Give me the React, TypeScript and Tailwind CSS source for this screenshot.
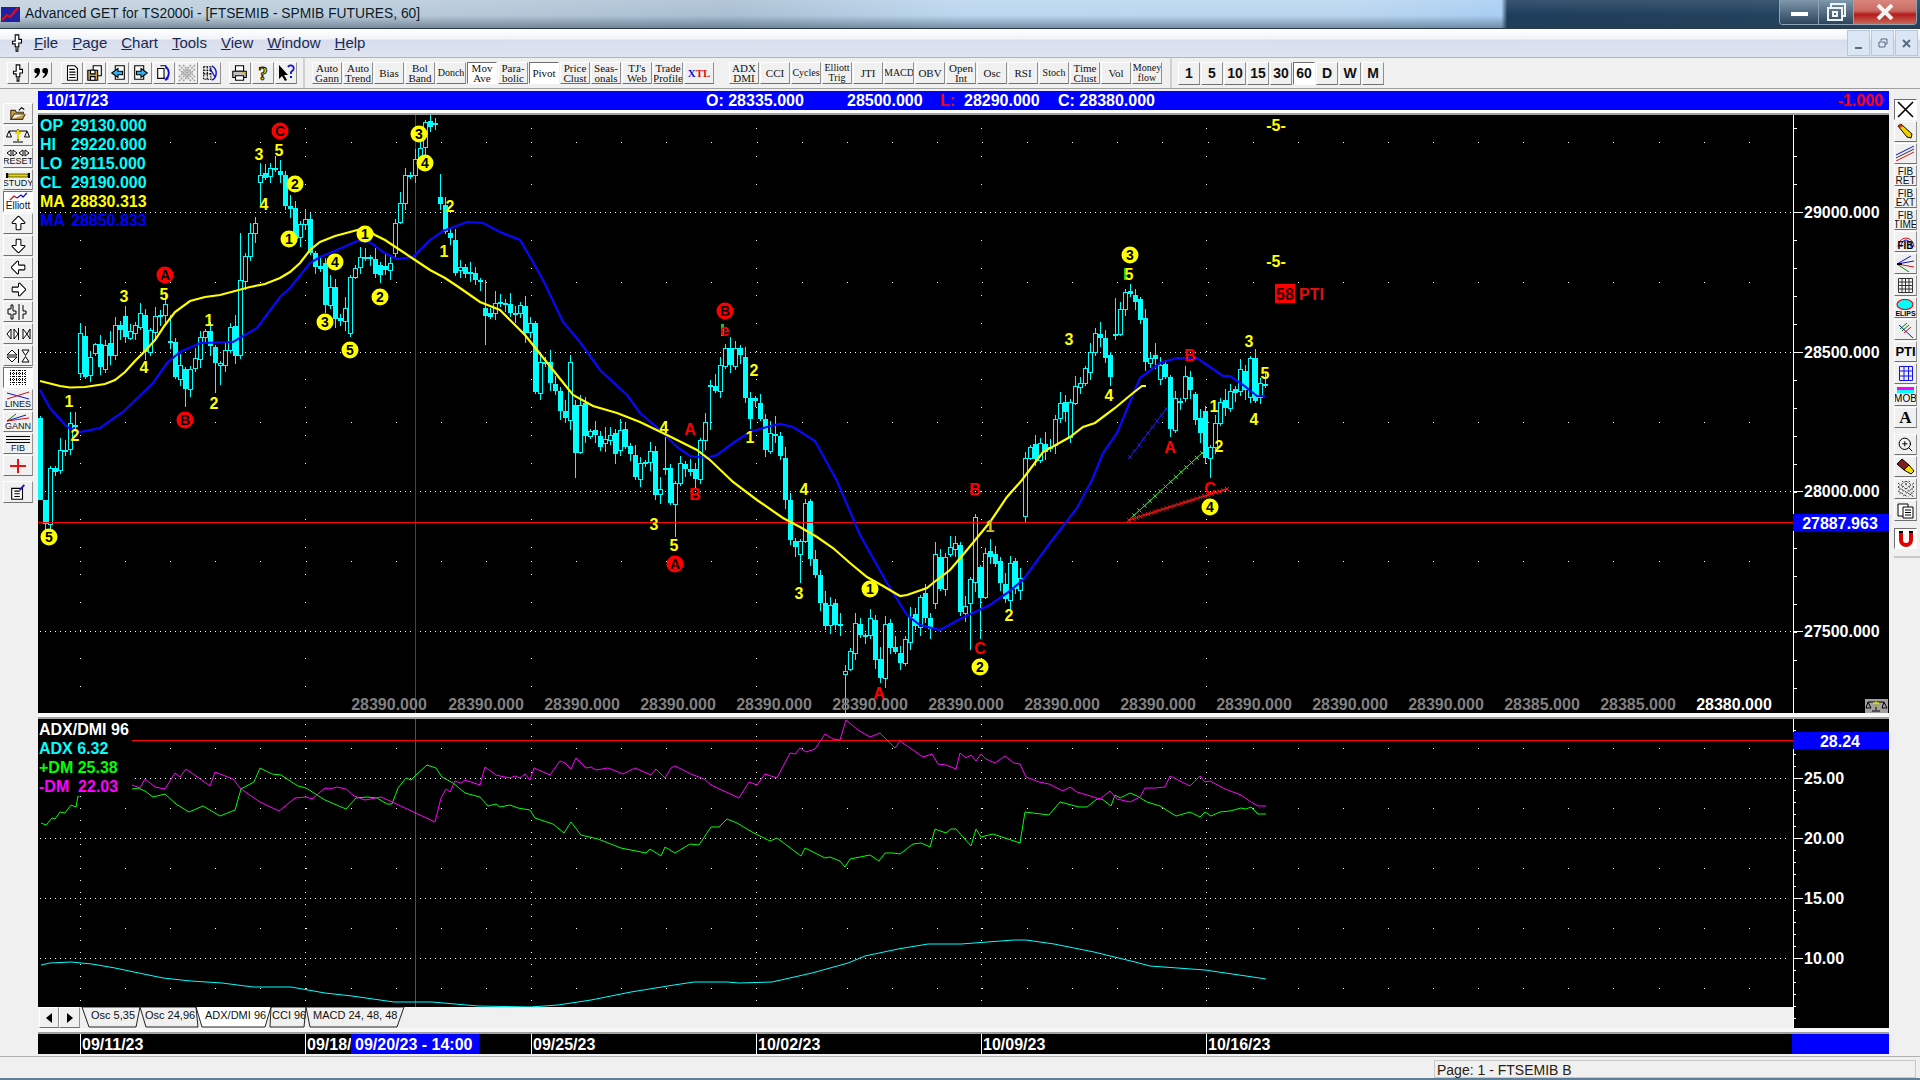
import { ArrowBigDown, ArrowBigLeft, ArrowBigRight, ArrowBigUp, ZoomIn } from 'lucide-react';
import type { ReactNode } from 'react';
import clsx from 'clsx';

// [body top, body bottom, filled, wick top?, wick bottom?]; first bar at x=40, one bar every 5px
const BARS: number[][] = [
  [418, 500, 1, 416, 500], [500, 524, 1, 500, 530], [468, 524, 0, 466, 530], [468, 472, 1, 466, 476], [450, 470, 0, 438, 474], [450, 452, 1, 440, 456], [423, 449, 0, 412, 455], [425, 427, 1, 412, 432],
  [333, 373, 0, 323, 378], [336, 377, 1], [357, 375, 0], [344, 353, 0, 343], [344, 367, 1], [345, 369, 0], [343, 356, 1], [325, 355, 0], [325, 330, 1], [316, 337, 1, 306], [331, 338, 0], [325, 333, 0], [313, 327, 0], [315, 352, 1], [330, 352, 0], [316, 332, 0], [315, 316, 1, 310, 326], [304, 315, 0], [341, 343, 1, 315], [342, 377, 1], [365, 379, 0], [369, 389, 1, 367, 407], [369, 389, 0], [358, 368, 0], [337, 359, 0], [331, 337, 0], [331, 346, 1], [347, 363, 1, 345, 393], [363, 365, 0, 361, 385], [350, 365, 0], [327, 350, 0], [326, 356, 1], [280, 355, 0, 233], [256, 281, 0], [233, 256, 0], [223, 233, 0, 217],
  [175, 182, 0, 163, 207], [173, 178, 1], [168, 176, 0], [168, 169, 1], [171, 175, 1, 160], [175, 206, 1], [206, 209, 1], [208, 239, 1], [224, 237, 0], [219, 224, 0], [219, 253, 1], [253, 267, 1], [266, 269, 1], [263, 305, 1], [287, 305, 0], [287, 319, 1], [318, 321, 1], [308, 321, 0], [277, 333, 0, 275, 337], [268, 277, 0], [257, 267, 0], [257, 258, 1, 248], [257, 258, 1], [259, 274, 1, 248], [265, 275, 1, 262, 283], [266, 270, 1], [263, 270, 0], [223, 253, 0], [203, 222, 0], [175, 203, 0], [175, 176, 1], [159, 175, 0], [148, 158, 0], [122, 147, 0], [121, 127, 1, 115], [123, 124, 1, 118, 130],
  [197, 204, 1, 174], [205, 232, 1], [233, 238, 1], [240, 273, 1], [267, 270, 0], [267, 274, 1], [272, 273, 1], [273, 280, 1], [280, 281, 1], [308, 316, 1, 280, 345], [313, 317, 1], [303, 313, 0], [302, 304, 1], [303, 304, 1], [304, 313, 1], [313, 314, 1], [305, 313, 0], [306, 333, 1], [323, 332, 0], [323, 392, 1], [362, 393, 0], [362, 364, 1], [362, 383, 1], [384, 391, 1], [391, 411, 1], [411, 418, 1], [362, 420, 0, 355], [405, 453, 1, 400, 478], [405, 452, 0], [403, 436, 1], [431, 436, 0], [430, 435, 1], [436, 447, 1], [439, 443, 0], [435, 440, 0], [433, 454, 1], [430, 450, 0], [429, 447, 1], [446, 454, 1], [455, 477, 1], [463, 479, 0], [462, 463, 1], [451, 462, 0], [451, 495, 1], [489, 494, 0], [468, 469, 1, 437], [468, 503, 1], [483, 504, 0, 481, 537], [463, 483, 0], [464, 469, 1], [469, 472, 1], [469, 479, 1], [440, 479, 0], [422, 440, 0],
  [385, 387, 1, 380, 430], [386, 391, 1], [365, 391, 0], [348, 366, 0], [348, 365, 1], [348, 366, 0], [348, 355, 1], [357, 398, 1], [398, 419, 1], [398, 401, 1], [403, 419, 1], [419, 450, 1], [433, 451, 0], [434, 435, 1, 416], [436, 456, 1], [458, 500, 1], [500, 540, 1], [541, 547, 1], [541, 554, 0, 539, 583], [503, 541, 0, 499], [501, 559, 1], [559, 575, 1], [575, 603, 1], [603, 626, 1], [605, 625, 0], [603, 625, 1], [624, 626, 1], [671, 674, 0, 665, 714], [651, 669, 0], [623, 653, 0], [624, 635, 1], [635, 636, 1], [618, 635, 0], [620, 660, 1], [659, 678, 1], [624, 678, 0], [623, 648, 1], [647, 652, 1], [653, 663, 1], [639, 663, 0], [617, 642, 0], [614, 626, 1], [597, 627, 0], [593, 618, 1], [618, 629, 1], [554, 603, 0], [557, 589, 1], [557, 589, 0], [547, 554, 0], [543, 549, 0], [545, 612, 1], [606, 613, 0], [579, 603, 0, 577, 650], [517, 582, 0, 514], [567, 598, 1, 565, 639], [553, 597, 0], [551, 557, 1], [554, 564, 1], [561, 583, 1], [584, 599, 1], [563, 600, 0], [561, 589, 1], [578, 590, 0],
  [458, 516, 0], [447, 458, 0], [444, 459, 1], [443, 460, 0], [444, 452, 1], [447, 448, 1], [419, 445, 0], [403, 418, 0], [402, 412, 1], [402, 437, 0], [386, 403, 0], [383, 387, 0], [368, 383, 0], [352, 372, 0], [333, 352, 0], [334, 338, 1], [338, 358, 1], [355, 377, 1, 352, 386], [334, 335, 1, 298, 340], [309, 334, 0], [292, 309, 0], [291, 294, 1, 284], [295, 302, 1], [299, 320, 1], [318, 362, 1], [358, 363, 0], [355, 359, 1], [365, 379, 0], [364, 377, 1], [377, 429, 1, 375, 437], [398, 430, 0], [401, 402, 1], [376, 398, 0], [377, 390, 1], [394, 420, 1], [418, 433, 1], [411, 458, 1], [447, 458, 0, 445, 478], [423, 447, 0], [402, 423, 0], [400, 408, 1], [391, 408, 0], [389, 393, 1], [369, 391, 0], [371, 390, 1], [358, 397, 0], [358, 401, 1], [383, 397, 0], [384, 385, 1],
];

const MA_YELLOW = [[40, 381], [60, 386], [70, 387.5], [85, 387], [105, 384], [115, 380], [125, 372], [135, 361], [145, 351], [155, 340], [165, 325], [175, 312], [190, 301], [205, 297], [220, 295], [235, 291], [250, 287], [265, 284], [280, 278], [290, 272], [300, 263], [310, 250], [320, 242], [335, 236], [350, 232], [365, 228], [375, 235], [385, 240], [400, 250], [415, 260], [430, 270], [445, 278], [460, 288], [480, 302], [500, 310], [510, 320], [525, 335], [537, 350], [557, 375], [573, 395], [593, 406], [617, 413], [640, 422], [667, 435], [697, 450], [710, 460], [733, 482], [757, 500], [783, 518], [800, 527], [817, 537], [833, 548], [850, 563], [867, 577], [883, 586], [900, 596], [907, 595], [927, 588], [933, 583], [950, 570], [967, 550], [990, 522], [1007, 497], [1022, 480], [1043, 452], [1070, 437], [1083, 427], [1095, 423], [1115, 408], [1133, 393], [1142, 386], [1146, 386]];

const MA_BLUE = [[40, 390], [50, 408], [67, 427], [80, 432], [100, 428], [123, 412], [153, 383], [167, 363], [180, 352], [200, 343], [233, 342], [257, 328], [280, 297], [290, 288], [310, 263], [320, 257], [337, 250], [357, 241], [370, 242], [383, 252], [397, 259], [413, 257], [430, 240], [443, 231], [467, 222], [483, 223], [500, 232], [520, 240], [533, 262], [543, 280], [563, 322], [580, 342], [600, 370], [627, 395], [640, 413], [660, 430], [677, 447], [690, 456], [707, 458], [717, 455], [733, 443], [750, 432], [767, 427], [780, 424], [793, 427], [815, 441], [837, 481], [860, 535], [887, 583], [907, 615], [920, 625], [940, 630], [960, 619], [990, 605], [1007, 593], [1023, 580], [1050, 543], [1077, 508], [1092, 480], [1103, 453], [1117, 433], [1140, 378], [1160, 363], [1177, 358], [1197, 358], [1207, 365], [1223, 376], [1230, 376], [1243, 385], [1257, 396], [1265, 396]];

const DM_PLUS = [[41, 823], [46, 825], [52, 818], [55, 819], [60, 812], [65, 813], [71, 805], [76, 807], [78, 796], [132, 789], [138, 788], [145, 791], [153, 797], [165, 794], [176, 804], [189, 812], [203, 806], [220, 816], [235, 810], [241, 789], [254, 782], [260, 768], [272, 774], [281, 775], [298, 786], [306, 788], [325, 800], [346, 809], [356, 798], [367, 797], [377, 798], [387, 804], [392, 804], [398, 788], [406, 778], [411, 780], [417, 774], [427, 765], [436, 768], [442, 777], [453, 783], [465, 793], [480, 797], [488, 806], [496, 804], [500, 807], [510, 805], [518, 808], [530, 810], [535, 818], [553, 824], [564, 833], [571, 822], [581, 835], [598, 839], [621, 848], [646, 853], [650, 849], [661, 856], [665, 847], [675, 853], [690, 844], [699, 845], [711, 827], [719, 827], [727, 819], [737, 823], [752, 832], [770, 841], [777, 838], [801, 856], [805, 848], [825, 858], [830, 857], [840, 861], [845, 867], [850, 859], [860, 857], [870, 855], [879, 861], [885, 853], [893, 853], [900, 854], [913, 844], [921, 843], [930, 847], [935, 829], [946, 833], [951, 829], [956, 829], [971, 846], [976, 829], [981, 837], [993, 834], [1020, 843], [1025, 812], [1049, 815], [1060, 802], [1079, 807], [1087, 807], [1097, 799], [1102, 799], [1111, 806], [1115, 795], [1120, 798], [1130, 793], [1137, 796], [1147, 802], [1160, 806], [1176, 816], [1190, 812], [1200, 817], [1205, 812], [1211, 816], [1220, 812], [1230, 811], [1241, 808], [1246, 809], [1251, 807], [1258, 814], [1266, 814]];

const DM_MINUS = [[132, 785], [140, 788], [145, 779], [155, 787], [165, 789], [175, 773], [180, 777], [186, 769], [210, 786], [215, 772], [233, 779], [241, 789], [260, 802], [279, 811], [295, 798], [306, 797], [312, 799], [325, 788], [330, 789], [337, 787], [346, 789], [354, 796], [365, 800], [381, 797], [390, 801], [435, 822], [441, 798], [446, 789], [450, 792], [455, 781], [461, 783], [465, 780], [480, 785], [485, 767], [496, 775], [500, 776], [510, 778], [515, 776], [520, 778], [525, 774], [530, 780], [534, 768], [550, 775], [560, 761], [565, 763], [571, 769], [576, 758], [586, 768], [591, 767], [596, 770], [608, 768], [623, 774], [635, 768], [651, 775], [656, 769], [665, 778], [671, 768], [675, 766], [691, 774], [704, 779], [711, 785], [739, 798], [749, 782], [757, 785], [765, 774], [777, 778], [790, 753], [795, 754], [800, 748], [806, 752], [815, 749], [825, 734], [833, 739], [840, 740], [846, 720], [858, 730], [870, 737], [880, 733], [895, 748], [900, 741], [923, 757], [932, 754], [938, 764], [946, 765], [956, 769], [960, 753], [966, 758], [971, 755], [976, 761], [981, 754], [986, 759], [995, 763], [1005, 756], [1014, 763], [1020, 764], [1026, 777], [1039, 782], [1049, 784], [1063, 791], [1070, 787], [1077, 792], [1100, 799], [1110, 791], [1117, 799], [1130, 802], [1140, 797], [1145, 788], [1155, 788], [1165, 787], [1170, 776], [1190, 786], [1200, 776], [1205, 782], [1210, 781], [1225, 789], [1241, 795], [1251, 802], [1258, 806], [1266, 806]];

const ADX = [[41, 965], [50, 963], [71, 962], [92, 964], [115, 968], [134, 972], [163, 978], [191, 981], [222, 983], [253, 987], [291, 987], [325, 993], [352, 996], [394, 1002], [432, 1002], [478, 1006], [530, 1007], [558, 1005], [591, 1000], [631, 992], [674, 985], [694, 982], [727, 982], [739, 983], [772, 982], [812, 973], [848, 963], [865, 956], [898, 949], [928, 944], [961, 944], [1014, 940], [1026, 940], [1054, 944], [1094, 952], [1135, 962], [1150, 966], [1205, 970], [1246, 976], [1266, 979]];

const PLAIN: [string, number, number, string][] = [
  ['3', 124, 296, '#ffff00'], ['5', 164, 294, '#ffff00'], ['1', 209, 320, '#ffff00'], ['4', 144, 367, '#ffff00'], ['1', 69, 401, '#ffff00'], ['2', 75, 435, '#ffff00'], ['2', 214, 403, '#ffff00'],
  ['3', 259, 154, '#ffff00'], ['5', 279, 150, '#ffff00'], ['4', 264, 204, '#ffff00'], ['2', 450, 206, '#ffff00'], ['1', 444, 251, '#ffff00'], ['4', 664, 427, '#ffff00'], ['3', 654, 524, '#ffff00'],
  ['5', 674, 545, '#ffff00'], ['2', 754, 370, '#ffff00'], ['1', 750, 437, '#ffff00'], ['4', 804, 489, '#ffff00'], ['3', 799, 593, '#ffff00'], ['1', 990, 526, '#d8c020'], ['2', 1009, 615, '#ffff00'],
  ['3', 1069, 339, '#ffff00'], ['4', 1109, 395, '#ffff00'], ['5', 1129, 274, '#ffff00'], ['3', 1249, 341, '#ffff00'], ['5', 1265, 373, '#ffff00'], ['1', 1214, 406, '#ffff00'], ['2', 1219, 446, '#ffff00'], ['4', 1254, 419, '#ffff00'],
  ['-5-', 1276, 125, '#ffff00'], ['-5-', 1276, 261, '#ffff00'],
  ['A', 690, 429, '#ff0000'], ['B', 695, 494, '#ff0000'], ['A', 879, 693, '#ff0000'], ['B', 975, 489, '#ff0000'], ['C', 980, 648, '#ff0000'], ['A', 1170, 447, '#ff0000'], ['B', 1190, 355, '#ff0000'], ['C', 1210, 488, '#ff0000'], ['e', 725, 330, '#ff0000'],
];

const CIRCLED: [string, number, number, string][] = [
  ['5', 49, 537, '#ffff00'], ['2', 295, 184, '#ffff00'], ['1', 289, 239, '#ffff00'], ['4', 335, 262, '#ffff00'], ['1', 365, 234, '#ffff00'], ['3', 325, 322, '#ffff00'], ['5', 350, 350, '#ffff00'], ['2', 380, 297, '#ffff00'], ['3', 419, 134, '#ffff00'], ['4', 425, 163, '#ffff00'], ['1', 870, 589, '#ffff00'], ['2', 980, 667, '#ffff00'], ['3', 1130, 255, '#ffff00'], ['4', 1210, 507, '#ffff00'],
  ['C', 280, 131, '#ff0000'], ['A', 165, 275, '#ff0000'], ['B', 185, 420, '#ff0000'], ['A', 675, 564, '#ff0000'], ['B', 725, 311, '#ff0000'],
];

const GRID_X = [80, 305, 531, 756, 981, 1206];
const WICK_ROW = [389, 486, 582, 678, 774, 870, 966, 1062, 1158, 1254, 1350, 1446];

const pts = (p: number[][]) => p.map((q) => q.join(',')).join(' ');

function Btn({ className, pressed, children }: { className: string; pressed?: boolean; children?: ReactNode }) {
  return (
    <div
      className={clsx(
        'flex shrink-0 items-center justify-center overflow-hidden border',
        pressed
          ? 'border-t-[#707070] border-l-[#707070] border-r-white border-b-white bg-white'
          : 'border-t-white border-l-white border-r-[#909090] border-b-[#707070] bg-[#f0f0f0]',
        className
      )}
    >
      {children}
    </div>
  );
}

function Tool({ a, b, small, pressed }: { a: string; b?: string; small?: boolean; pressed?: boolean }) {
  return (
    <Btn className="h-[22px] w-[30px]" pressed={pressed}>
      <span className={clsx("text-center font-['Liberation_Serif',serif] text-[#111]", small ? 'text-[10px] leading-[10px]' : 'text-[11px] leading-[10px]')}>
        {a}
        {b && <br />}
        {b}
      </span>
    </Btn>
  );
}

function Ic({ children, s = 18 }: { children: ReactNode; s?: number }) {
  return (
    <svg width={s} height={s} viewBox="0 0 20 20" fill="none" stroke="#000" strokeWidth="1.2">
      {children}
    </svg>
  );
}

const Pin = () => (
  <Ic>
    <path d="M8 1h4v5h3v4h-3v4h-1v5h-2v-5H8v-3H5V8h3z" fill="#fff" />
  </Ic>
);

const Page = () => <path d="M5 2h8l3 3v13H5zM7 6h6M7 9h7M7 12h7M7 15h7" fill="#fff" />;

const LABEL9 = "font-['Liberation_Sans',sans-serif] text-[9px] leading-[9px] text-[#111]";

function LeftBar() {
  const item = 'h-[21px] w-[30px]';
  return (
    <div className="flex w-[38px] shrink-0 flex-col gap-[1px] pl-[3px] pt-[14px]">
      <Btn className={item}>
        <Ic>
          <path d="M2 16V6h5l1 2h8v2H6l-4 6h13l3-6" fill="#c9a04a" stroke="#4a3410" />
          <path d="M11 6l3-3 3 2" stroke="#000" />
        </Ic>
      </Btn>
      <Btn className={item}>
        <svg width="24" height="17" viewBox="0 0 24 17" fill="none" stroke="#000">
          <path d="M12 2v12M7 15h10M3 4h18M3 4L0.5 10h5zM21 4l-2.5 6h5z" />
          <path d="M12 3v9M9 6h6" stroke="#e8d800" strokeWidth="2" />
        </svg>
      </Btn>
      <Btn className={item}>
        <div className="flex flex-col items-center">
          <svg width="24" height="8" viewBox="0 0 24 8" fill="#fff" stroke="#000">
            <path d="M1 4l4-3v6zM11 4L7 1v6zM13 4l4-3v6zM23 4l-4-3v6z" />
          </svg>
          <span className={LABEL9}>RESET</span>
        </div>
      </Btn>
      <Btn className={item}>
        <div className="flex flex-col items-center">
          <svg width="24" height="7" viewBox="0 0 24 7">
            <path d="M1 1v5M23 1v5" stroke="#000" strokeWidth="2" />
            <rect x="2" y="2" width="20" height="3" fill="#e8d800" stroke="#000" strokeWidth=".6" />
          </svg>
          <span className={LABEL9}>STUDY</span>
        </div>
      </Btn>
      <Btn className={item} pressed>
        <div className="flex flex-col items-center">
          <svg width="22" height="9" viewBox="0 0 22 9" fill="none" strokeWidth="1.3">
            <path d="M3 8l4-4 3 2" stroke="#d01010" />
            <path d="M10 6l4-3 2 2 4-4" stroke="#1010d0" />
          </svg>
          <span className="font-['Liberation_Sans',sans-serif] text-[10px] leading-[10px] text-[#111]">Elliott</span>
        </div>
      </Btn>
      <Btn className={item}><ArrowBigUp size={19} strokeWidth={1.3} color="#000" fill="#fff" /></Btn>
      <Btn className={item}><ArrowBigDown size={19} strokeWidth={1.3} color="#000" fill="#fff" /></Btn>
      <Btn className={item}><ArrowBigLeft size={19} strokeWidth={1.3} color="#000" fill="#fff" /></Btn>
      <Btn className={item}><ArrowBigRight size={19} strokeWidth={1.3} color="#000" fill="#fff" /></Btn>
      <Btn className={item}>
        <svg width="24" height="16" viewBox="0 0 24 16" fill="none" stroke="#000">
          <path d="M2 5h3V1h2v6h3v3H7v5H5v-5H2zM13 0v16M17 1v6h3v3h-3M17 10v5" />
        </svg>
      </Btn>
      <Btn className={item}>
        <svg width="25" height="12" viewBox="0 0 25 12" fill="#fff" stroke="#000">
          <path d="M5 1L1 6l4 5zM8 1l4 5-4 5zM12.5 0v12M17 1l4 5-4 5zM24 1l-3 5 3 5z" />
        </svg>
      </Btn>
      <Btn className={item}>
        <svg width="25" height="14" viewBox="0 0 25 14" fill="#fff" stroke="#000">
          <path d="M6 1L1 6h10zM6 13L1 8h10zM12.5 0v14M16 1h7l-3.5 5.5zM16 13h7l-3.5-5.5z" />
        </svg>
      </Btn>
      <Btn className={item} pressed>
        <svg width="16" height="15" viewBox="0 0 16 15" stroke="#000" strokeWidth="1" strokeDasharray="1 1">
          <path d="M.5 0v15M3.5 0v15M6.5 0v15M9.5 0v15M12.5 0v15M15.5 0v15M0 .5h16M0 3.5h16M0 6.5h16M0 9.5h16M0 12.5h16" />
        </svg>
      </Btn>
      <Btn className={item}>
        <div className="flex flex-col items-center">
          <svg width="24" height="9" viewBox="0 0 24 9" fill="none">
            <path d="M1 2l22 6" stroke="#1010d0" />
            <path d="M1 8l22-7" stroke="#d01010" />
          </svg>
          <span className={LABEL9}>LINES</span>
        </div>
      </Btn>
      <Btn className={item}>
        <div className="flex flex-col items-center">
          <svg width="24" height="9" viewBox="0 0 24 9" fill="none">
            <path d="M1 8L10 1" stroke="#008000" />
            <path d="M1 8L20 2" stroke="#1010d0" />
            <path d="M1 8l22-3" stroke="#d01010" />
          </svg>
          <span className={LABEL9}>GANN</span>
        </div>
      </Btn>
      <Btn className={item}>
        <div className="flex flex-col items-center">
          <svg width="24" height="9" viewBox="0 0 24 9" stroke="#000">
            <path d="M0 1.5h24M0 4.5h24M0 7.5h24" />
          </svg>
          <span className={LABEL9}>FIB</span>
        </div>
      </Btn>
      <Btn className={item}>
        <svg width="16" height="16" viewBox="0 0 16 16" stroke="#e81010" strokeWidth="2">
          <path d="M8 1v14M0 8h16" />
        </svg>
      </Btn>
      <div className="mt-[4px]">
        <Btn className="h-[22px] w-[30px]">
          <Ic>
            <path d="M3 6h12v12H3zM6 9h6M6 12h6M6 15h6" fill="#fff" />
            <path d="M12 8l5-6" stroke="#1010d0" strokeWidth="2" />
          </Ic>
        </Btn>
      </div>
    </div>
  );
}

function FibText({ a, b }: { a: string; b: string }) {
  return (
    <span className="text-center font-['Liberation_Sans',sans-serif] text-[10px] leading-[9px] text-[#111]">
      {a}
      <br />
      {b}
    </span>
  );
}

function RightBar() {
  const item = 'h-[21px] w-[23px]';
  return (
    <div className="flex w-[29px] shrink-0 flex-col gap-[1px] pl-[3px] pt-[10px]">
      <Btn className={item} pressed>
        <svg width="17" height="17" viewBox="0 0 17 17" stroke="#000" strokeWidth="1.6"><path d="M1 1l15 15M16 1L1 16" /></svg>
      </Btn>
      <Btn className={item}>
        <svg width="19" height="17" viewBox="0 0 19 17">
          <path d="M2 3l3-2 11 10-1 4-4-1z" fill="#f4d000" stroke="#000" />
          <path d="M2 3l3-2 2 2-3 2z" fill="#c83020" />
        </svg>
      </Btn>
      <Btn className={item}>
        <svg width="19" height="15" viewBox="0 0 19 15" fill="none">
          <path d="M0 9L18 0" stroke="#1010d0" />
          <path d="M0 12L18 3" stroke="#333" />
          <path d="M0 15L18 6" stroke="#e01010" />
        </svg>
      </Btn>
      <Btn className={item}><FibText a="FIB" b="RET" /></Btn>
      <Btn className={item}><FibText a="FIB" b="EXT" /></Btn>
      <Btn className={item}><FibText a="FIB" b="TIME" /></Btn>
      <Btn className={item}>
        <div className="relative flex h-[18px] w-[18px] items-end justify-center">
          <svg className="absolute top-0 left-0" width="18" height="14" viewBox="0 0 18 14" fill="none">
            <path d="M1 14a8 9 0 0 1 16 0" stroke="#e01010" />
            <path d="M4 14a5 7 0 0 1 10 0" stroke="#1010d0" />
          </svg>
          <span className="relative font-['Liberation_Sans',sans-serif] text-[10px] leading-[10px] font-bold text-black">FIB</span>
        </div>
      </Btn>
      <Btn className={item}>
        <svg width="19" height="17" viewBox="0 0 19 17" fill="none">
          <path d="M1 9L15 1" stroke="#1010d0" />
          <path d="M1 9L18 6" stroke="#1010d0" />
          <path d="M1 9l17 3" stroke="#e01010" />
          <path d="M1 9l12 8" stroke="#008000" />
          <path d="M1 9h5" stroke="#000" strokeWidth="2" />
        </svg>
      </Btn>
      <Btn className={item}>
        <svg width="15" height="15" viewBox="0 0 15 15" stroke="#333" fill="#f8f8f8">
          <path d="M.5.5h14v14H.5zM.5 4h14M.5 7.5h14M.5 11h14M4 .5v14M7.5.5v14M11 .5v14" />
        </svg>
      </Btn>
      <Btn className={item}>
        <div className="flex flex-col items-center">
          <svg width="18" height="11" viewBox="0 0 18 11"><ellipse cx="9" cy="5.5" rx="8" ry="5" fill="#00ffff" stroke="#e01010" strokeWidth="1.2" /></svg>
          <span className="font-['Liberation_Sans',sans-serif] text-[7px] leading-[7px] font-bold text-black">ELIPS</span>
        </div>
      </Btn>
      <Btn className={item}>
        <svg width="18" height="17" viewBox="0 0 18 17" fill="none">
          <path d="M3 8l7-6M5 10l7-6" stroke="#008000" />
          <path d="M7 12l7-6" stroke="#e01010" />
          <path d="M2 4l14 13" stroke="#1010d0" />
        </svg>
      </Btn>
      <Btn className={item}>
        <span className="font-['Liberation_Sans',sans-serif] text-[13px] font-bold text-black">PTI</span>
      </Btn>
      <Btn className={item}>
        <svg width="14" height="15" viewBox="0 0 14 15" fill="none" stroke="#1010f0">
          <path d="M.5.5h13v14H.5zM.5 5h13M.5 10h13M5 .5v14M9.5.5v14" />
        </svg>
      </Btn>
      <Btn className={item}>
        <div className="flex w-full flex-col items-center">
          <div className="h-[3px] w-[17px] bg-[#ff00ff]" />
          <div className="mb-[1px] h-[3px] w-[17px] bg-[#00ffff]" />
          <span className="font-['Liberation_Sans',sans-serif] text-[10px] leading-[10px] text-black">MOB</span>
        </div>
      </Btn>
      <Btn className={item}>
        <span className="font-['Liberation_Serif',serif] text-[17px] leading-[17px] font-bold text-black">A</span>
      </Btn>
      <div className="mt-[5px] flex flex-col gap-[1px]">
        <Btn className={item}><ZoomIn size={17} color="#000" strokeWidth={1.4} /></Btn>
        <Btn className={item}>
          <svg width="19" height="17" viewBox="0 0 19 17">
            <path d="M1 6l5-5 7 6-5 5z" fill="#802020" stroke="#000" />
            <path d="M8 12l5-5 5 6-3 3z" fill="#f4e000" stroke="#000" />
          </svg>
        </Btn>
        <Btn className={item}>
          <svg width="16" height="16" viewBox="0 0 16 16" stroke="#333" strokeDasharray="2 2">
            <path d="M0 2l16 12M0 6l16 10M0 10l10 6M4 0l12 10M8 0l8 6M16 2L0 14M16 6L4 16M16 10l-6 6M12 0L0 10M8 0L0 6" />
          </svg>
        </Btn>
        <Btn className={item}>
          <svg width="17" height="16" viewBox="0 0 17 16" stroke="#000" fill="#fff">
            <path d="M1 1h10v12H1z" />
            <path d="M6 4h10v11H6zM8 7h6M8 9.500h6M8 12h6" />
          </svg>
        </Btn>
      </div>
      <div className="mt-[6px]">
        <Btn className={item} pressed>
          <svg width="16" height="17" viewBox="0 0 16 17" fill="none">
            <path d="M3 1v9a5 5 0 0 0 10 0V1" stroke="#e00000" strokeWidth="4" />
            <path d="M1 2h4M11 2h4" stroke="#000" strokeWidth="2" />
          </svg>
        </Btn>
      </div>
      <div className="mt-[6px] h-[2px] w-full bg-[#c8c8c8]" />
    </div>
  );
}

function Candles() {
  return (
    <>
      {BARS.map((b, i) => {
        const x = 40 + i * 5;
        const top = b[3] ?? b[0] - (2 + ((i * 7) % 11));
        const bot = b[4] ?? b[1] + (2 + ((i * 5) % 9));
        return (
          <g key={x}>
            <line x1={x + 0.5} x2={x + 0.5} y1={top} y2={bot} stroke="#00ffff" />
            {b[2] ? (
              <rect x={x - 2} y={b[0]} width={5} height={Math.max(b[1] - b[0], 2)} fill="#00ffff" />
            ) : (
              <rect x={x - 1.5} y={b[0] + 0.5} width={4} height={b[1] - b[0]} fill="#000" stroke="#00ffff" />
            )}
          </g>
        );
      })}
    </>
  );
}

function TrendMarks({ x1, y1, x2, y2, n, color }: { x1: number; y1: number; x2: number; y2: number; n: number; color: string }) {
  const d = Array.from({ length: n + 1 }, (_, i) => {
    const x = x1 + ((x2 - x1) * i) / n;
    const y = y1 + ((y2 - y1) * i) / n;
    return `M${x - 2} ${y - 2}l4 4M${x - 2} ${y + 2}l4-4`;
  }).join('');
  return <path d={`M${x1} ${y1}L${x2} ${y2}${d}`} stroke={color} fill="none" />;
}

function MainChart() {
  return (
    <div className="relative h-[598px] w-[1851px] bg-black">
      <svg className="block" width="1851" height="598" viewBox="38 115 1851 598" fontWeight="bold" fontSize="16">
        {/* grid */}
        <g stroke="#fff" shapeRendering="crispEdges">
          {[212, 352, 491, 631].map((y) => (
            <line key={y} x1="40" x2="1793" y1={y + 0.5} y2={y + 0.5} strokeDasharray="1 4" />
          ))}
          {[142, 282, 422, 561].map((y) => (
            <line key={y} x1="80" x2="1793" y1={y + 0.5} y2={y + 0.5} strokeDasharray="1 44.1" />
          ))}
          {GRID_X.map((x) => (
            <line key={x} x1={x + 0.5} x2={x + 0.5} y1="128" y2="700" strokeDasharray="1 26.9" />
          ))}
        </g>
        <line x1="415.5" x2="415.5" y1="115" y2="713" stroke="#b01818" shapeRendering="crispEdges" />
        <g shapeRendering="crispEdges">
          <Candles />
        </g>
        <line x1="38" x2="1793" y1="522.5" y2="522.5" stroke="#ff0000" shapeRendering="crispEdges" />
        <polyline points={pts(MA_BLUE)} fill="none" stroke="#0808ff" strokeWidth="2.2" />
        <polyline points={pts(MA_YELLOW)} fill="none" stroke="#ffff00" strokeWidth="2.2" />
        <TrendMarks x1={1130} y1={457} x2={1166} y2={409} n={8} color="#1818e0" />
        <TrendMarks x1={1129} y1={520} x2={1202} y2={453} n={14} color="#20e020" />
        <TrendMarks x1={1129} y1={520} x2={1227} y2={489} n={26} color="#f01818" />

        {/* elliott labels */}
        <rect x="721" y="324" width="3" height="12" fill="#10d010" />
        <rect x="1124" y="268" width="3" height="12" fill="#10d010" />
        {PLAIN.map(([t, x, y, c]) => (
          <text key={`${t}${x}${y}`} x={x} y={y} fill={c} textAnchor="middle" dominantBaseline="central">{t}</text>
        ))}
        {CIRCLED.map(([t, x, y, c]) => (
          <g key={`${t}${x}${y}`}>
            <circle cx={x} cy={y} r="8.5" fill={c} />
            <text x={x} y={y} fill="#000" fontSize="14" textAnchor="middle" dominantBaseline="central">{t}</text>
          </g>
        ))}
        <rect x="1275" y="284" width="20" height="19" fill="#ff0000" />
        <text x="1285" y="294" fill="#300" textAnchor="middle" dominantBaseline="central">58</text>
        <text x="1299" y="294" fill="#e01010" dominantBaseline="central">PTI</text>

        {/* last-bar price row */}
        {WICK_ROW.map((x) => (
          <text key={x} x={x} y="704" fill="#808080" textAnchor="middle" dominantBaseline="central">28390.000</text>
        ))}
        <text x="1542" y="704" fill="#808080" textAnchor="middle" dominantBaseline="central">28385.000</text>
        <text x="1638" y="704" fill="#808080" textAnchor="middle" dominantBaseline="central">28385.000</text>
        <text x="1734" y="704" fill="#fff" textAnchor="middle" dominantBaseline="central">28380.000</text>

        {/* price axis */}
        <rect x="1793" y="115" width="96" height="598" fill="#000" />
        <line x1="1793.5" x2="1793.5" y1="115" y2="713" stroke="#fff" shapeRendering="crispEdges" />
        {Array.from({ length: 21 }, (_, i) => 128 + i * 28).map((y) => (
          <line key={y} x1="1793" x2="1797" y1={y + 0.5} y2={y + 0.5} stroke="#fff" shapeRendering="crispEdges" />
        ))}
        {[['29000.000', 212], ['28500.000', 352], ['28000.000', 491], ['27500.000', 631]].map(([t, y]) => (
          <g key={t as string}>
            <line x1="1793" x2="1803" y1={(y as number) + 0.5} y2={(y as number) + 0.5} stroke="#fff" shapeRendering="crispEdges" />
            <text x="1804" y={y} fill="#fff" dominantBaseline="central">{t}</text>
          </g>
        ))}
        <rect x="1793" y="514" width="96" height="17" fill="#0000ff" />
        <text x="1840" y="523" fill="#fff" textAnchor="middle" dominantBaseline="central">27887.963</text>
        <rect x="1865" y="699" width="23" height="14" fill="#a0a0a0" />
        <path d="M1876 701v9M1868 702h16M1868 702l-2 6h5zM1884 702l-2 6h5zM1872 711h8" stroke="#000" fill="none" />
        <path d="M1876 701v6M1873 703h6" stroke="#ffff00" />
      </svg>

      <div className="absolute top-[1px] left-[2px] font-bold text-[16px] leading-[19px]">
        <div className="text-[#00ffff]">
          <div className="flex"><span className="w-[31px]">OP</span>29130.000</div>
          <div className="flex"><span className="w-[31px]">HI</span>29220.000</div>
          <div className="flex"><span className="w-[31px]">LO</span>29115.000</div>
          <div className="flex"><span className="w-[31px]">CL</span>29190.000</div>
        </div>
        <div className="flex text-[#ffff00]"><span className="w-[31px]">MA</span>28830.313</div>
        <div className="flex text-[#0000ff]"><span className="w-[31px]">MA</span>28850.833</div>
      </div>
    </div>
  );
}

function AdxPanel() {
  return (
    <div className="flex h-[309px] w-[1851px]">
      <div className="flex w-[1755px] flex-col">
        <div className="relative h-[288px] w-[1755px] bg-black">
          <svg className="block" width="1755" height="288" viewBox="38 719 1755 288">
            <g stroke="#fff" shapeRendering="crispEdges">
              {[778, 838, 898, 958].map((y) => (
                <line key={y} x1="40" x2="1786" y1={y + 0.5} y2={y + 0.5} strokeDasharray="1 4" />
              ))}
              {[748, 808, 868, 928, 988].map((y) => (
                <line key={y} x1="80" x2="1786" y1={y + 0.5} y2={y + 0.5} strokeDasharray="1 44.1" />
              ))}
              {GRID_X.map((x) => (
                <line key={x} x1={x + 0.5} x2={x + 0.5} y1="724" y2="1007" strokeDasharray="1 11" />
              ))}
            </g>
            <line x1="132" x2="1793" y1="740.5" y2="740.5" stroke="#ff0000" shapeRendering="crispEdges" />
            <line x1="415.5" x2="415.5" y1="719" y2="1007" stroke="#f01010" shapeRendering="crispEdges" />
            <polyline points={pts(DM_PLUS)} fill="none" stroke="#00ff00" />
            <polyline points={pts(DM_MINUS)} fill="none" stroke="#ff00ff" />
            <polyline points={pts(ADX)} fill="none" stroke="#00ffff" />
          </svg>
          <div className="absolute top-[1px] left-[1px] w-[93px] bg-black text-[16px] leading-[19px] font-bold">
            <div className="text-white">ADX/DMI 96</div>
            <div className="text-[#00ffff]">ADX 6.32</div>
            <div className="text-[#00ff00]">+DM 25.38</div>
            <div className="text-[#ff00ff]">-DM&nbsp; 22.03</div>
          </div>
        </div>
        <TabStrip />
      </div>
      <svg className="block" width="96" height="309" viewBox="1793 719 96 309" fontWeight="bold" fontSize="16">
        <rect x="1793" y="719" width="96" height="309" fill="#000" />
        <line x1="1793.500" x2="1793.500" y1="719" y2="1028" stroke="#fff" shapeRendering="crispEdges" />
        {Array.from({ length: 25 }, (_, i) => 730 + i * 12).map((y) => (
          <line key={y} x1="1793" x2="1796" y1={y + 0.5} y2={y + 0.5} stroke="#fff" shapeRendering="crispEdges" />
        ))}
        {[['25.00', 778], ['20.00', 838], ['15.00', 898], ['10.00', 958]].map(([t, y]) => (
          <g key={t as string}>
            <line x1="1793" x2="1803" y1={(y as number) + 0.5} y2={(y as number) + 0.5} stroke="#fff" shapeRendering="crispEdges" />
            <text x="1804" y={y} fill="#fff" dominantBaseline="central">{t}</text>
          </g>
        ))}
        <rect x="1793" y="732" width="96" height="17" fill="#0000ff" />
        <text x="1840" y="741" fill="#fff" textAnchor="middle" dominantBaseline="central">28.24</text>
      </svg>
    </div>
  );
}

function TabStrip() {
  return (
    <div className="flex h-[21px] w-[1755px] bg-[#f0f0f0] pl-[1px]">
      <Btn className="h-[21px] w-[20px]">
        <svg width="7" height="10" viewBox="0 0 7 10"><path d="M6 0v10L0 5z" fill="#000" /></svg>
      </Btn>
      <Btn className="h-[21px] w-[21px]">
        <svg width="7" height="10" viewBox="0 0 7 10"><path d="M1 0v10l6-5z" fill="#000" /></svg>
      </Btn>
      <svg className="block" width="340" height="21" viewBox="80 1007 340 21" fontSize="11" fill="#111">
        <polygon points="82,1007 140,1007 136,1027 89,1027" fill="#f0f0f0" stroke="#222" />
        <polygon points="140,1007 196,1007 198,1027 146,1027" fill="#f0f0f0" stroke="#222" />
        <polygon points="271,1007 306,1007 304,1027 270,1027" fill="#f0f0f0" stroke="#222" />
        <polygon points="306,1007 404,1007 397,1027 310,1027" fill="#f0f0f0" stroke="#222" />
        <polygon points="196,1007 271,1007 265,1027 202,1027" fill="#fff" stroke="#222" />
        <line x1="197" x2="270" y1="1007" y2="1007" stroke="#fff" strokeWidth="2" />
        <text x="91" y="1015" dominantBaseline="central">Osc 5,35</text>
        <text x="145" y="1015" dominantBaseline="central">Osc 24,96</text>
        <text x="205" y="1015" dominantBaseline="central">ADX/DMI 96</text>
        <text x="272" y="1015" dominantBaseline="central">CCI 96</text>
        <text x="313" y="1015" dominantBaseline="central">MACD 24, 48, 48</text>
      </svg>
    </div>
  );
}

function DateBar() {
  return (
    <div className="flex h-[20px] w-[1851px] bg-black">
      <svg className="block" width="1754" height="20" viewBox="38 1034 1754 20" fontWeight="bold" fontSize="16" fill="#fff">
        {GRID_X.map((x) => (
          <line key={x} x1={x + 0.5} x2={x + 0.5} y1="1034" y2="1054" stroke="#fff" shapeRendering="crispEdges" />
        ))}
        {[['09/11/23', 82], ['09/18/', 307], ['09/25/23', 533], ['10/02/23', 758], ['10/09/23', 983], ['10/16/23', 1208]].map(([t, x]) => (
          <text key={t as string} x={x} y="1044" dominantBaseline="central">{t}</text>
        ))}
        <rect x="351" y="1034" width="128" height="20" fill="#0000ff" />
        <text x="355" y="1044" dominantBaseline="central">09/20/23 - 14:00</text>
      </svg>
      <div className="w-[97px] bg-[#0000ff]" />
    </div>
  );
}

function TopToolbar() {
  const b = 'h-[22px] w-[22px]';
  return (
    <div className="flex h-[30px] items-center gap-[1px] bg-[#f0f0f0] pl-[7px]">
      <Btn className={b}><Pin /></Btn>
      <Btn className={b}>
        <svg width="14" height="10" viewBox="0 0 14 10" fill="#000">
          <path d="M3 0a2.500 2.500 0 0 1 3 3c0 3-2 6-5 7l-.5-1c1.500-1 2.500-2 2.500-3.500A2.500 2.500 0 0 1 3 0zM11 0a2.500 2.500 0 0 1 3 3c0 3-2 6-5 7l-.5-1c1.500-1 2.500-2 2.500-3.500A2.500 2.500 0 0 1 11 0z" />
        </svg>
      </Btn>
      <div className="w-[7px]" />
      <Btn className={b}><Ic><Page /></Ic></Btn>
      <Btn className={b}>
        <Ic>
          <path d="M8 2h9v11H8z" fill="#fff" />
          <path d="M2 7h11v11H2z" fill="#c9a04a" />
          <path d="M5 7h5v4H5zM5 14h5v4H5z" fill="#fff" />
        </Ic>
      </Btn>
      <Btn className={b}>
        <Ic>
          <path d="M7 2h10v15H7z" fill="#fff" />
          <path d="M10 5L3 10l7 5v-3h5V8h-5z" fill="#30b0f0" />
        </Ic>
      </Btn>
      <Btn className={b}>
        <Ic>
          <path d="M3 2h10v15H3z" fill="#fff" />
          <path d="M10 5l7 5-7 5v-3H5V8h5z" fill="#30b0f0" />
        </Ic>
      </Btn>
      <Btn className={b}>
        <Ic>
          <path d="M3 5h7v11H3zM6 2h6v3" fill="#fff" />
          <path d="M12 3a9 9 0 0 1 0 14" stroke="#1010d0" strokeWidth="2" />
          <path d="M10 15l2 3 3-2" stroke="#1010d0" />
        </Ic>
      </Btn>
      <Btn className={b}>
        <svg width="18" height="18" viewBox="0 0 18 18" stroke="#a0a0a0" strokeWidth="1.5">
          <path d="M1 1l16 16M17 1L1 17M1 5l12 12M5 1l12 12M17 5L5 17M13 1L1 13" strokeDasharray="2 1" />
        </svg>
      </Btn>
      <Btn className={b}>
        <Ic>
          <path d="M3 3h8v14H3zM3 7h8M3 11h8M7 3v14" strokeDasharray="2 1" />
          <path d="M12 2a9 9 0 0 1 0 16M10 5l6 10" stroke="#1010d0" strokeWidth="1.6" />
        </Ic>
      </Btn>
      <div className="w-[6px]" />
      <Btn className={b}>
        <Ic>
          <path d="M5 2h9v6H5z" fill="#fff" />
          <path d="M2 8h15v7H2z" fill="#c0c0c0" />
          <path d="M5 13h9v5H5z" fill="#fff" />
          <path d="M12 10h3" stroke="#e8b800" strokeWidth="2" />
        </Ic>
      </Btn>
      <Btn className={b}>
        <span className="font-['Liberation_Serif',serif] text-[19px] leading-[19px] font-bold text-[#e8d000] [-webkit-text-stroke:0.8px_#000]">?</span>
      </Btn>
      <Btn className={b}>
        <svg width="19" height="18" viewBox="0 0 19 18">
          <path d="M2 1v14l3-3 3 5 2-1-3-5h4z" fill="#000" />
          <path d="M11 3a3 3 0 1 1 4 4l-1 1v2" stroke="#1010d0" strokeWidth="1.8" fill="none" />
          <path d="M14 12v2" stroke="#1010d0" strokeWidth="2" />
        </svg>
      </Btn>
      <div className="ml-[5px] mr-[6px] h-[30px] border-l-2 border-l-[#d0d0d0]" />
      <Tool a="Auto" b="Gann" />
      <Tool a="Auto" b="Trend" />
      <Tool a="Bias" />
      <Tool a="Bol" b="Band" />
      <Tool a="Donch" small />
      <Tool a="Mov" b="Ave" pressed />
      <Tool a="Para-" b="bolic" />
      <Tool a="Pivot" pressed />
      <Tool a="Price" b="Clust" />
      <Tool a="Seas-" b="onals" />
      <Tool a="TJ's" b="Web" />
      <Tool a="Trade" b="Profile" />
      <Btn className="h-[22px] w-[30px]">
        <span className="font-['Liberation_Serif',serif] text-[11px] font-bold"><span className="text-[#1010e0]">X</span><span className="text-[#e01010]">TL</span></span>
      </Btn>
      <div className="w-[13px]" />
      <Tool a="ADX" b="DMI" />
      <Tool a="CCI" />
      <Tool a="Cycles" small />
      <Tool a="Elliott" b="Trig" small />
      <Tool a="JTI" />
      <Tool a="MACD" small />
      <Tool a="OBV" />
      <Tool a="Open" b="Int" />
      <Tool a="Osc" />
      <Tool a="RSI" />
      <Tool a="Stoch" small />
      <Tool a="Time" b="Clust" />
      <Tool a="Vol" />
      <Tool a="Money" b="flow" small />
      <div className="ml-[7px] mr-[5px] h-[30px] border-l-2 border-l-[#d0d0d0]" />
      {['1', '5', '10', '15', '30', '60', 'D', 'W', 'M'].map((t) => (
        <Btn key={t} className="h-[23px] w-[22px]" pressed={t === '60'}>
          <span className="text-[14px] font-bold text-[#111]">{t}</span>
        </Btn>
      ))}
    </div>
  );
}

export default function App() {
  return (
    <div className="flex h-[1080px] w-[1920px] flex-col overflow-hidden bg-[#f0f0f0] font-['Liberation_Sans',Arial,sans-serif]">
      {/* window title */}
      <div className="relative flex h-[29px] items-center border-b border-b-[#2a3a48] bg-[linear-gradient(180deg,rgba(255,255,255,0.12)_0%,rgba(255,255,255,0)_55%,rgba(40,60,80,0.45)_100%),linear-gradient(90deg,#c4d3df_0%,#b5c8d8_25%,#a9bfd2_38%,#bbd6ee_50%,#bad6ef_70%,#a8cef2_78%,#a8cef2_78.2%,#1d3d5c_78.5%,#24445f_100%)]">
        <svg className="ml-[1px]" width="20" height="18" viewBox="0 0 20 18" fill="none">
          <rect y="2" width="19" height="15" fill="#2020a0" />
          <path d="M1 15l5-5 3 2 8-9" stroke="#e01010" strokeWidth="2" />
        </svg>
        <span className="ml-[4px] text-[13.800px] text-[#0b1a28]">Advanced GET for TS2000i - [FTSEMIB - SPMIB FUTURES, 60]</span>
        <div className="absolute top-0 right-[3px] flex h-[25px] overflow-hidden rounded-b-[4px] border border-t-0 border-[#8fa3b4]">
          <div className="flex w-[39px] items-center justify-center border-r border-r-[#8fa3b4] bg-[linear-gradient(180deg,#7f98ac_0%,#50697f_55%,#2d465c_100%)] pt-[4px]">
            <div className="h-[4px] w-[17px] bg-white" />
          </div>
          <div className="flex w-[35px] items-center justify-center border-r border-r-[#8fa3b4] bg-[linear-gradient(180deg,#7f98ac_0%,#50697f_55%,#2d465c_100%)]">
            <svg width="20" height="18" viewBox="0 0 20 18" fill="none" stroke="#eef2f5" strokeWidth="2">
              <path d="M5 4V1h14v12h-3" />
              <path d="M2 5h14v12H2z" />
              <path d="M7 9h4v4H7z" />
            </svg>
          </div>
          <div className="flex w-[62px] items-center justify-center bg-[linear-gradient(180deg,#d9867c_0%,#c96a62_45%,#b51c1c_60%,#c86858_100%)]">
            <svg width="18" height="16" viewBox="0 0 18 16" stroke="#f2f2f2" strokeWidth="4"><path d="M2 1l14 14M16 1L2 15" /></svg>
          </div>
        </div>
      </div>

      {/* menu */}
      <div className="flex h-[29px] items-center border-b border-b-[#b0b4bc] bg-[linear-gradient(180deg,#fff_0%,#f2f4f8_35%,#d9deee_40%,#dfe4f0_100%)] pl-[8px]">
        <div className="w-[26px]"><Pin /></div>
        <div className="flex gap-[14px] text-[15px] text-[#1a2a50]">
          {['File', 'Page', 'Chart', 'Tools', 'View', 'Window', 'Help'].map((m) => (
            <span key={m}>
              <span className="underline">{m[0]}</span>
              {m.slice(1)}
            </span>
          ))}
        </div>
        <div className="ml-auto mr-[2px] flex gap-[1px]">
          <div className="flex h-[26px] w-[23px] items-end justify-center border border-[#b8c6da] bg-[#dbe6f5] pb-[6px]">
            <div className="h-[2px] w-[7px] bg-[#5a6a80]" />
          </div>
          <div className="flex h-[26px] w-[23px] items-center justify-center border border-[#b8c6da] bg-[#dbe6f5]">
            <svg width="10" height="10" viewBox="0 0 10 10" fill="none" stroke="#5a6a80"><path d="M3 3V1h6v5H7M1 4h6v5H1z" /></svg>
          </div>
          <div className="flex h-[26px] w-[23px] items-center justify-center border border-[#b8c6da] bg-[#dbe6f5]">
            <svg width="9" height="9" viewBox="0 0 9 9" stroke="#5a6a80" strokeWidth="2"><path d="M1 1l7 7M8 1L1 8" /></svg>
          </div>
        </div>
      </div>

      <TopToolbar />

      {/* body */}
      <div className="flex h-[968px] border-t border-t-[#a0a0a0]">
        <LeftBar />
        <div className="w-[1853px] shrink-0 pt-[2px]">
          <div className="flex h-[19px] w-[1851px] items-center bg-[#0000ff] text-[16px] leading-[19px] font-bold text-white">
            <span className="ml-[8px] w-[660px]">10/17/23</span>
            <span className="w-[141px]">O: 28335.000</span>
            <span className="w-[93px]">28500.000</span>
            <span className="w-[24px] text-[#ff0000]">L:</span>
            <span className="w-[94px]">28290.000</span>
            <span>C: 28380.000</span>
            <span className="mr-[6px] ml-auto text-[#ff0000]">-1.000</span>
          </div>
          <div className="h-[5px] w-[1851px] border-b-2 border-b-[#a0a0a0] bg-white" />
          <MainChart />
          <div className="h-[6px] w-[1851px] border-b-2 border-b-[#a0a0a0] bg-[#f8f8f8]" />
          <AdxPanel />
          <div className="h-[6px] w-[1851px] border-b-2 border-b-[#a0a0a0] bg-[#f8f8f8]" />
          <DateBar />
        </div>
        <RightBar />
      </div>

      {/* status */}
      <div className="flex h-[22px] border-t border-t-[#b0b0b0] bg-[#f0f0f0] pl-[1434px] pr-[4px] pt-[3px]">
        <div className="h-[18px] w-full border border-[#c8c8c8] pl-[2px] text-[14px] leading-[18px] text-[#2a2010]">Page: 1 - FTSEMIB B</div>
      </div>
      <div className="h-[2px] bg-[#5f7e98]" />
    </div>
  );
}
